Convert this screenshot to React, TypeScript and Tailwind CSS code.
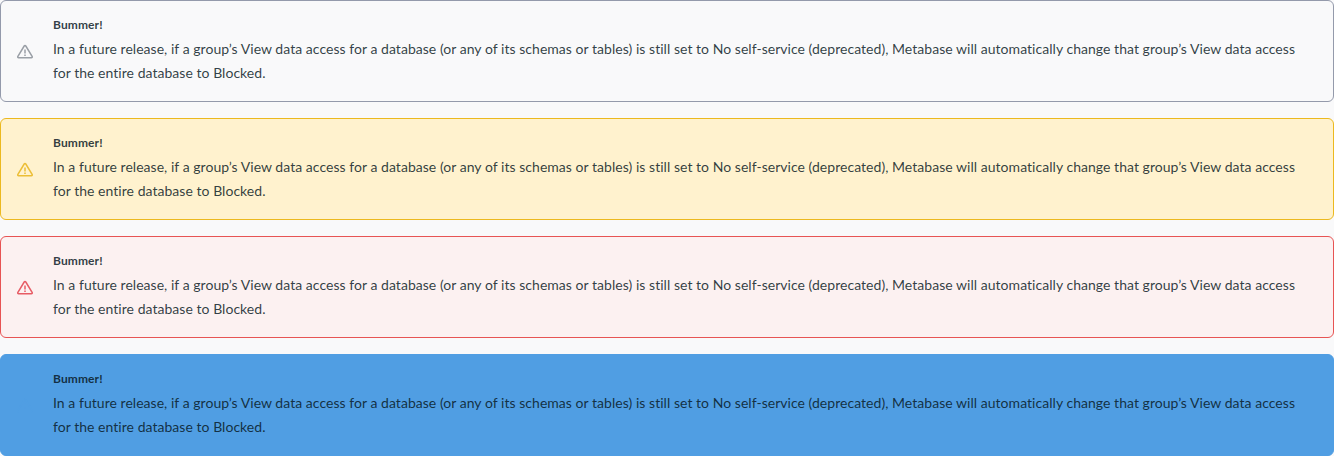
const variants = [
  { box: "border-[#949aab] bg-[#f9f9fa]", icon: "text-[#9a9fa6]" },
  { box: "border-[#ecb91f] bg-[#fff2ce]", icon: "text-[#ecbe36]" },
  { box: "border-[#e75454] bg-[#fcf1f1]", icon: "text-[#e75c65]" },
  { box: "border-[#509ee3] bg-[#509ee3]", icon: "text-[#509ee3]" },
];

function WarningIcon() {
  return (
    <svg className="block" width="16" height="16" viewBox="0 0 16 16" fill="none" stroke="currentColor" strokeWidth="1.5" strokeLinecap="round" strokeLinejoin="round">
      <path d="M7.2 2 .9 12.4c-.4.65 0 1.3.7 1.3h12.8c.7 0 1.1-.65.7-1.3L8.8 2c-.4-.6-1.2-.6-1.6 0Z" />
      <path d="M8 5.5v4M8 10.5v1.5" strokeLinecap="butt" />
    </svg>
  );
}

function Alert({ box, icon }: { box: string; icon: string }) {
  return (
    <div className={`flex h-[102px] items-center rounded-md border pr-6 pl-4 ${box}`}>
      <div className={`mt-0.5 mr-5 shrink-0 ${icon}`}>
        <WarningIcon />
      </div>
      <div className="min-w-0 flex-1">
        <div className="text-xs leading-4 font-bold tracking-[0.1px]">Bummer!</div>
        <div className="mt-1 text-sm leading-6 tracking-[0.038px]">
          In a future release, if a group’s View data access for a database (or any of its schemas or tables) is still
          set to No self-service (deprecated), Metabase will automatically change that group’s View data access for the
          entire database to Blocked.
        </div>
      </div>
    </div>
  );
}

export default function App() {
  return (
    <div className="flex h-[456px] flex-col gap-4 bg-[#f9f9fa] font-['Lato',sans-serif] text-[#071722]/84 antialiased [font-variant-ligatures:none]">
      {variants.map((v) => (
        <Alert key={v.box} {...v} />
      ))}
    </div>
  );
}
